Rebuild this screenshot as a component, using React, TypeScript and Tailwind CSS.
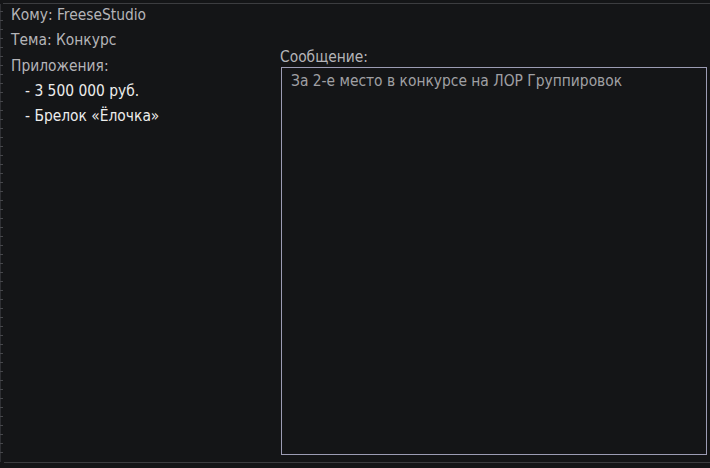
import React from 'react';

const items = ['- 3 500 000 руб.', '- Брелок «Ёлочка»'];

export default function App() {
  return (
    <div className="w-[710px] h-[468px] bg-[#141517] flex flex-col text-[15.4px] leading-[20px]" style={{ fontFamily: '"DejaVu Sans Condensed", "DejaVu Sans", sans-serif' }}>
      <div className="h-[3px]" />
      <div className="h-px bg-[#3c3d40] ml-[3px]" />
      <div className="flex flex-1 border-l border-[#2e2f33]">
        {/* tick marks */}
        <div className="flex flex-col gap-[8px] pt-[7px] w-[2px] -ml-px">
          {Array.from({ length: 50 }).map((_, i) => (
            <div key={i} className="h-px w-[3px] bg-[#45464a]" />
          ))}
        </div>
        <div className="flex flex-1 pb-[7px] overflow-hidden">
          <div className="w-[279px] pl-[9px] pt-[1px] flex flex-col">
            <div className="text-[#b4b4b8] h-[25px]">Кому: FreeseStudio</div>
            <div className="text-[#b4b4b8] h-[26px]">Тема: Конкурс</div>
            <div className="text-[#b4b4b8] h-[25px]">Приложения:</div>
            {items.map((t) => (
              <div key={t} className="text-[#ececec] h-[25px] pl-[14px]">{t}</div>
            ))}
          </div>
          <div className="flex-1 flex flex-col pt-[43px] pr-[3px]">
            <div className="text-[#b4b4b8] h-[20px] -ml-px">Сообщение:</div>
            <div className="flex-1 border border-[#9c9cb4] px-[9px] pt-[3px] text-[#a0a0a4]">
              За 2-е место в конкурсе на ЛОР Группировок
            </div>
          </div>
        </div>
      </div>
      <div className="h-px bg-[#3c3d40] ml-[4px]" />
      <div className="h-[5px]" />
    </div>
  );
}
